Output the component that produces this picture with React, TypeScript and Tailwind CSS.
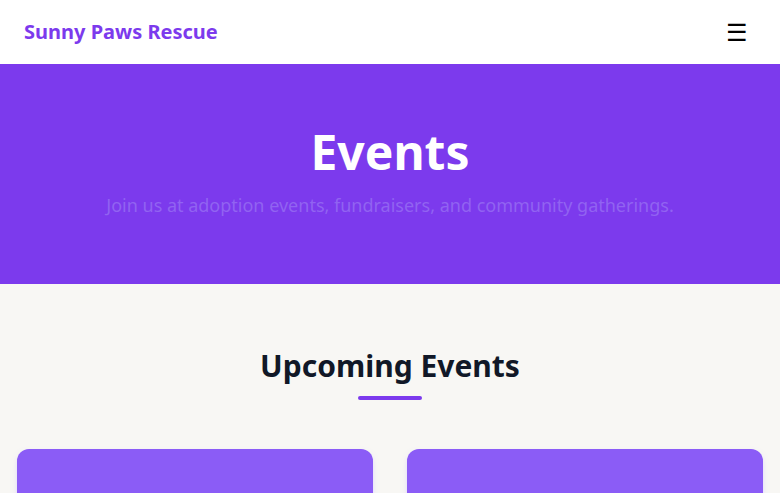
export default function App() {
  return (
    <div className="min-h-screen bg-[#f8f7f4] font-['Noto_Sans',sans-serif]">
      <header className="flex h-16 items-center justify-between bg-white px-6">
        <span className="text-xl font-bold text-[#7c3aed]">Sunny Paws Rescue</span>
        <button className="px-2 text-2xl leading-none text-black">☰</button>
      </header>

      <section className="flex h-[220px] flex-col items-center bg-[#7c3aed] px-6 pt-16">
        <h1 className="text-5xl font-bold leading-none text-white">Events</h1>
        <p className="mt-[15px] text-lg text-[#9163f1]">
          Join us at adoption events, fundraisers, and community gatherings.
        </p>
      </section>

      <section className="pt-[62px]">
        <div className="flex flex-col items-center">
          <h2 className="text-3xl font-bold leading-10 text-[#111827]">Upcoming Events</h2>
          <div className="mt-[10px] h-1 w-16 rounded-full bg-[#7c3aed]" />
        </div>
        <div className="mt-[49px] grid grid-cols-2 gap-[34px] px-[17px]">
          <div className="h-40 rounded-xl bg-[#8b5cf6] shadow-md shadow-violet-200" />
          <div className="h-40 rounded-xl bg-[#8b5cf6] shadow-md shadow-violet-200" />
        </div>
      </section>
    </div>
  );
}
